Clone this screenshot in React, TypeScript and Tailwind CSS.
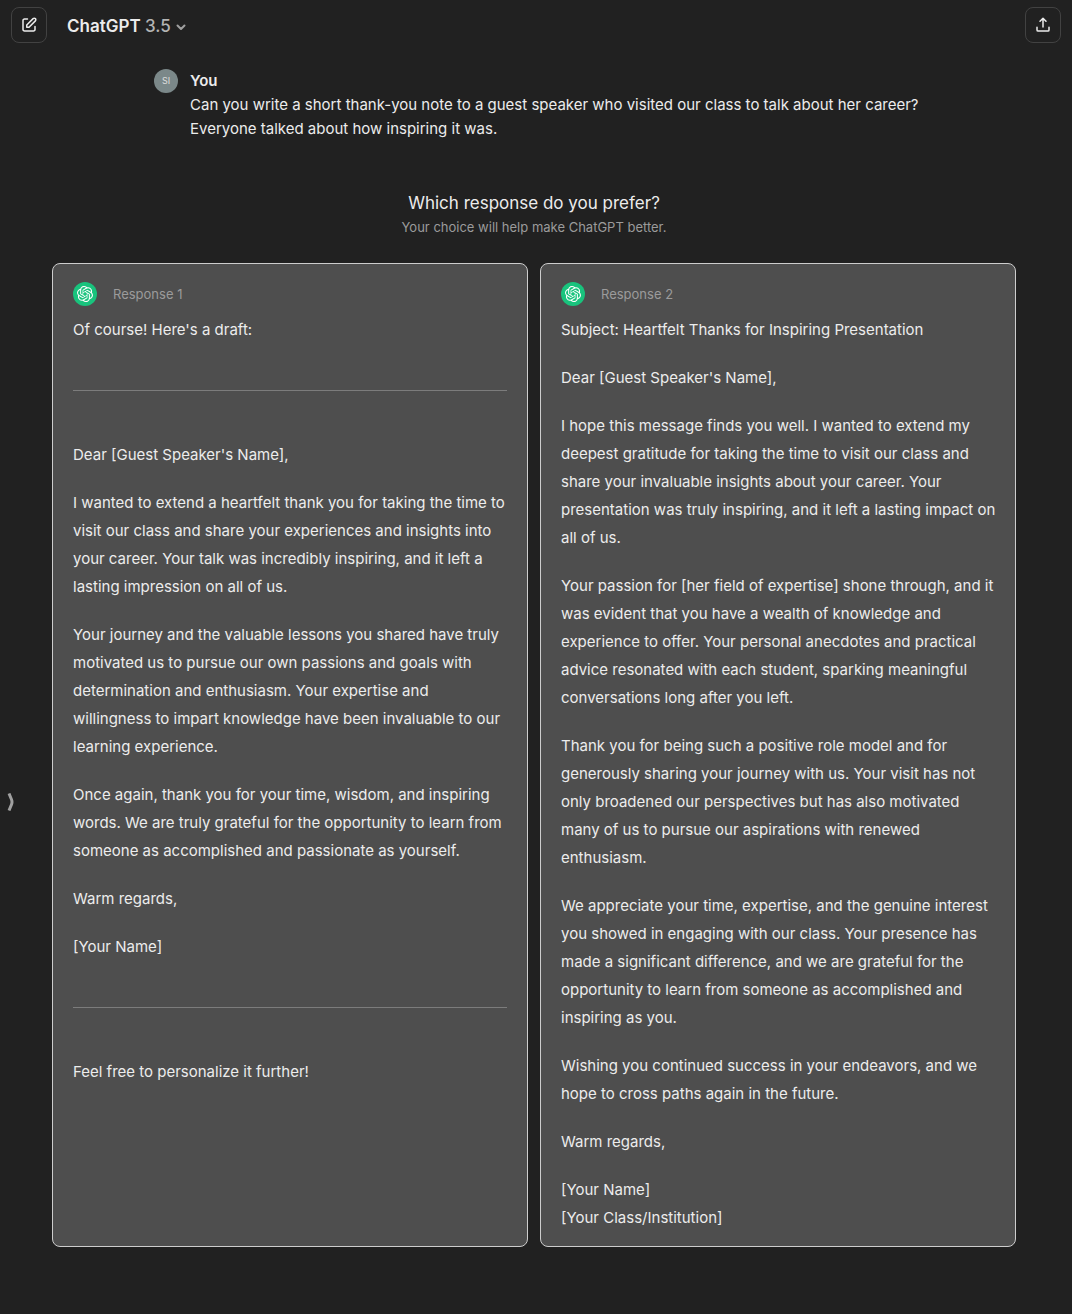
import type { ReactNode } from "react";
import { SiOpenai } from "react-icons/si";

function ComposeIcon() {
  return (
    <svg width="18" height="18" viewBox="0 0 24 24" fill="currentColor" aria-hidden="true">
      <path
        fillRule="evenodd"
        clipRule="evenodd"
        d="M16.7929 2.79289C18.0118 1.57394 19.9882 1.57394 21.2071 2.79289C22.4261 4.01184 22.4261 5.98815 21.2071 7.20711L12.7071 15.7071C12.5196 15.8946 12.2652 16 12 16H9C8.44772 16 8 15.5523 8 15V12C8 11.7348 8.10536 11.4804 8.29289 11.2929L16.7929 2.79289ZM19.7929 4.20711C19.355 3.7692 18.645 3.7692 18.2071 4.2071L10 12.4142V14H11.5858L19.7929 5.79289C20.2308 5.35499 20.2308 4.64501 19.7929 4.20711ZM6 5C5.44772 5 5 5.44771 5 6V18C5 18.5523 5.44772 19 6 19H18C18.5523 19 19 18.5523 19 18V14C19 13.4477 19.4477 13 20 13C20.5523 13 21 13.4477 21 14V18C21 19.6569 19.6569 21 18 21H6C4.34315 21 3 19.6569 3 18V6C3 4.34314 4.34315 3 6 3H10C10.5523 3 11 3.44771 11 4C11 4.55228 10.5523 5 10 5H6Z"
      />
    </svg>
  );
}

function ShareIcon() {
  return (
    <svg
      width="18"
      height="18"
      viewBox="0 0 24 24"
      fill="none"
      stroke="currentColor"
      strokeWidth="2"
      strokeLinecap="round"
      strokeLinejoin="round"
      aria-hidden="true"
    >
      <path d="M12 14.5V3M8 7l4-4 4 4M4 15v3.500a1.500 1.500 0 0 0 1.500 1.500h13a1.500 1.500 0 0 0 1.500-1.500V15" />
    </svg>
  );
}

function IconButton({ label, children }: { label: string; children: ReactNode }) {
  return (
    <button
      type="button"
      aria-label={label}
      className="flex size-9 items-center justify-center rounded-lg border border-[#424242] text-[#ececec]"
    >
      {children}
    </button>
  );
}

function Rule() {
  return <hr className="mt-[46px] mb-[50px] border-[#7c7c7c]" />;
}

function ResponseCard({ title, children }: { title: string; children: ReactNode }) {
  return (
    <article className="rounded-lg border border-[#cdcdcd] bg-[#4e4e4e] px-5 pt-[18px] pb-[14px]">
      <header className="mb-[10px] flex items-center gap-4">
        <span className="flex size-6 items-center justify-center rounded-full bg-[#19c37d] text-white">
          <SiOpenai size={16} aria-hidden="true" />
        </span>
        <h3 className="text-[13px] leading-6 text-[#9b9b9b]">{title}</h3>
      </header>
      <div className="text-[15px] leading-7 [&>p]:-mr-1 [&>p+p]:mt-5">{children}</div>
    </article>
  );
}

export default function App() {
  return (
    <div className="relative min-h-screen bg-[#212121] font-['Inter','Liberation_Sans',sans-serif] text-[#ececec]">
      <header className="flex items-center px-[11px] pt-[7px]">
        <IconButton label="New chat">
          <ComposeIcon />
        </IconButton>
        <button type="button" className="ml-5 flex items-center gap-0.5 pt-1 text-[17px] font-semibold">
          <span>
            ChatGPT <span className="font-medium text-[#b4b4b4]">3.5</span>
          </span>
          <svg width="16" height="16" viewBox="0 0 16 16" fill="none" stroke="#a0a0a0" strokeWidth="2" strokeLinecap="round" strokeLinejoin="round" aria-hidden="true">
            <path d="M4.5 6.5 8 10l3.500-3.500" />
          </svg>
        </button>
        <div className="ml-auto">
          <IconButton label="Share chat">
            <ShareIcon />
          </IconButton>
        </div>
      </header>

      <main className="pt-[26px] pr-14 pb-[67px] pl-[52px]">
        <section className="mx-auto flex max-w-[784px] gap-3 pl-3">
          <span className="flex size-6 shrink-0 items-center justify-center rounded-full bg-[#7b8889] text-[9px] text-[#dddddd]">
            SI
          </span>
          <div className="text-[15px] leading-6">
            <h2 className="font-semibold">You</h2>
            <p>
              Can you write a short thank-you note to a guest speaker who visited our class to talk about her career?
              Everyone talked about how inspiring it was.
            </p>
          </div>
        </section>

        <section className="mt-[50px]">
          <div className="text-center">
            <h1 className="text-[17px] leading-6">Which response do you prefer?</h1>
            <p className="text-[13px] leading-6 text-[#9b9b9b]">Your choice will help make ChatGPT better.</p>
          </div>

          <div className="mt-6 grid grid-cols-2 gap-3">
            <ResponseCard title="Response 1">
              <p>Of course! Here's a draft:</p>
              <Rule />
              <p>Dear [Guest Speaker's Name],</p>
              <p>
                I wanted to extend a heartfelt thank you for taking the time to visit our class and share your
                experiences and insights into your career. Your talk was incredibly inspiring, and it left a lasting
                impression on all of us.
              </p>
              <p>
                Your journey and the valuable lessons you shared have truly motivated us to pursue our own passions and
                goals with determination and enthusiasm. Your expertise and willingness to impart knowledge have been
                invaluable to our learning experience.
              </p>
              <p>
                Once again, thank you for your time, wisdom, and inspiring words. We are truly grateful for the
                opportunity to learn from someone as accomplished and passionate as yourself.
              </p>
              <p>Warm regards,</p>
              <p>[Your Name]</p>
              <Rule />
              <p>Feel free to personalize it further!</p>
            </ResponseCard>

            <ResponseCard title="Response 2">
              <p>Subject: Heartfelt Thanks for Inspiring Presentation</p>
              <p>Dear [Guest Speaker's Name],</p>
              <p>
                I hope this message finds you well. I wanted to extend my deepest gratitude for taking the time to visit
                our class and share your invaluable insights about your career. Your presentation was truly inspiring,
                and it left a lasting impact on all of us.
              </p>
              <p>
                Your passion for [her field of expertise] shone through, and it was evident that you have a wealth of
                knowledge and experience to offer. Your personal anecdotes and practical advice resonated with each
                student, sparking meaningful conversations long after you left.
              </p>
              <p>
                Thank you for being such a positive role model and for generously sharing your journey with us. Your
                visit has not only broadened our perspectives but has also motivated many of us to pursue our
                aspirations with renewed enthusiasm.
              </p>
              <p>
                We appreciate your time, expertise, and the genuine interest you showed in engaging with our class. Your
                presence has made a significant difference, and we are grateful for the opportunity to learn from
                someone as accomplished and inspiring as you.
              </p>
              <p>
                Wishing you continued success in your endeavors, and we hope to cross paths again in the future.
              </p>
              <p>Warm regards,</p>
              <p>
                [Your Name]
                <br />
                [Your Class/Institution]
              </p>
            </ResponseCard>
          </div>
        </section>
      </main>

      <button type="button" aria-label="Open sidebar" className="absolute top-[793px] left-[7px] text-[#a0a0a0]">
        <svg width="8" height="18" viewBox="0 0 8 18" fill="none" stroke="currentColor" strokeWidth="3" strokeLinejoin="round" aria-hidden="true">
          <path d="M2 0.5 4.500 6.500Q5.500 9 4.500 11.500L2 17.500" />
        </svg>
      </button>
    </div>
  );
}
